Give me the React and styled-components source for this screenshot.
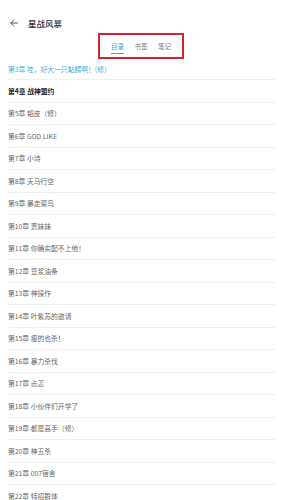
import React from "react";
import styled, { createGlobalStyle } from "styled-components";

const Global = createGlobalStyle`
  html, body { margin: 0; padding: 0; background: #fff; }
  body { font-family: "Noto Sans CJK SC", "Noto Sans", sans-serif; }
`;

const Page = styled.div`
  width: 282px;
  height: 500px;
  overflow: hidden;
  background: #fff;
`;

const Header = styled.div`
  display: flex;
  align-items: center;
  height: 14px;
  margin-top: 16px;
  padding-left: 10px;
  gap: 10px;
`;

const Title = styled.div`
  font-size: 8.5px;
  line-height: 14px;
  font-weight: 500;
  color: #333;
`;

const TabsWrap = styled.div`
  display: flex;
  justify-content: center;
  margin-top: 3px;
`;

const TabBox = styled.div`
  box-sizing: border-box;
  width: 86px;
  height: 26px;
  border: 2px solid #d3232d;
  display: flex;
  justify-content: center;
  align-items: flex-start;
  gap: 10.5px;
  padding-top: 7px;
`;

const Tab = styled.div`
  display: flex;
  flex-direction: column;
  align-items: center;
  font-size: 6.5px;
  line-height: 8px;
  color: ${(p) => (p.$active ? "#3d9fd6" : "#777")};
`;

const Underline = styled.div`
  width: 13px;
  height: 1px;
  margin-top: 2.5px;
  background: ${(p) => (p.$active ? "#3d9fd6" : "transparent")};
`;

const List = styled.div`
  padding: 0 7px 0 8px;
`;

const Row = styled.div`
  box-sizing: border-box;
  height: ${(p) => (p.$first ? "21px" : "22.5px")};
  display: flex;
  align-items: center;
  border-bottom: 1px solid #efefef;
  font-size: 6.8px;
  white-space: nowrap;
  color: ${(p) => (p.$current ? "#4eaadc" : p.$read ? "#222" : "#666")};
  font-weight: ${(p) => (p.$read ? 600 : 400)};
`;

const chapters = [
  "第3章 哇，好大一只黏鳄啊！(修）",
  "第4章 战神盟约",
  "第5章 韬皮（修）",
  "第6章 GOD LIKE",
  "第7章 小诗",
  "第8章 天马行空",
  "第9章 暴走菜鸟",
  "第10章 贾妹妹",
  "第11章 你确实配不上他！",
  "第12章 豆浆油条",
  "第13章 神操作",
  "第14章 叶紫苏的邀请",
  "第15章 瘦的也杀！",
  "第16章 暴力杀伐",
  "第17章 忐忑",
  "第18章 小伙伴们开学了",
  "第19章 都是高手（修）",
  "第20章 神五杀",
  "第21章 007宿舍",
  "第22章 特招群体",
];

const BackIcon = () => (
  <svg width="8" height="8" viewBox="0 0 8 8" fill="none">
    <path d="M7.5 4H0.8M3.8 1L0.8 4L3.8 7" stroke="#444" strokeWidth="0.9" strokeLinecap="round" strokeLinejoin="round" />
  </svg>
);

export default function App() {
  return (
    <Page>
      <Global />
      <Header>
        <BackIcon />
        <Title>星战风暴</Title>
      </Header>
      <TabsWrap>
        <TabBox>
          <Tab $active>
            目录
            <Underline $active />
          </Tab>
          <Tab>
            书签
            <Underline />
          </Tab>
          <Tab>
            笔记
            <Underline />
          </Tab>
        </TabBox>
      </TabsWrap>
      <List>
        {chapters.map((c, i) => (
          <Row key={c} $first={i === 0} $current={i === 0} $read={i === 1}>
            {c}
          </Row>
        ))}
      </List>
    </Page>
  );
}
